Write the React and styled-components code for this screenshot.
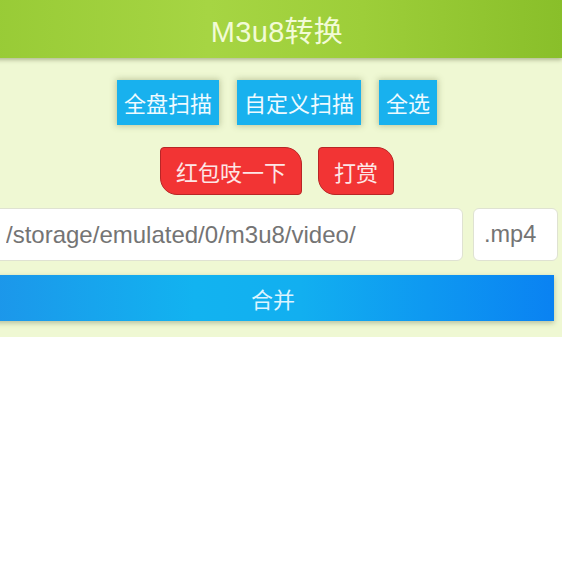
import React from "react";
import styled, { createGlobalStyle } from "styled-components";

const GlobalStyle = createGlobalStyle`
  html, body {
    margin: 0;
    padding: 0;
    background: #ffffff;
    overflow: hidden;
  }
  body {
    font-family: "Liberation Sans", "Noto Sans CJK SC", sans-serif;
  }
`;

const Page = styled.div`
  width: 570px;
  margin-left: -8px;
`;

const Header = styled.header`
  position: relative;
  z-index: 2;
  height: 58px;
  display: flex;
  align-items: center;
  justify-content: center;
  background: linear-gradient(90deg, #98cb36 0%, #a6d543 38%, #9dce39 65%, #89bf2a 100%);
  box-shadow: 0 2px 4px rgba(60, 70, 30, 0.35);
`;

const Title = styled.h1`
  margin: 0;
  font-size: 29px;
  font-weight: 400;
  color: #f2fbd6;
  letter-spacing: 0.3px;
`;

const Panel = styled.section`
  background: #eff8d3;
  padding: 22px 0 16px;
  display: flex;
  flex-direction: column;
  box-shadow: 0 1px 3px rgba(150, 160, 100, 0.35);
`;

const ButtonRow = styled.div`
  display: flex;
  justify-content: center;
  gap: ${(p) => p.$gap}px;
  margin-top: ${(p) => p.$top || 0}px;
`;

const ScanButton = styled.button`
  height: 45px;
  padding: 0 7px;
  border: none;
  border-radius: 0;
  background: #18b1ee;
  color: #eefaff;
  font-family: "Noto Sans CJK SC", sans-serif;
  font-size: 22px;
  line-height: 45px;
  box-shadow: 0 0 6px 1px rgba(130, 140, 90, 0.45);
  cursor: pointer;
`;

const RedButton = styled.button`
  height: 48px;
  padding: 0 15px;
  border: 1px solid #b82626;
  border-radius: 4px 17px 4px 17px;
  background: #f23434;
  color: #fde6e6;
  font-family: "Noto Sans CJK SC", sans-serif;
  font-size: 22px;
  cursor: pointer;
`;

const InputRow = styled.div`
  display: flex;
  gap: 10px;
  margin-top: 13px;
  padding-right: 4px;
`;

const PathInput = styled.input`
  flex: 1;
  min-width: 0;
  height: 53px;
  box-sizing: border-box;
  padding: 0 0 0 13px;
  border: 1px solid #dfe2d2;
  border-radius: 6px;
  background: #ffffff;
  color: #747474;
  font-family: "Liberation Sans", sans-serif;
  font-size: ${(p) => p.$size || 24}px;
  outline: none;
`;

const ExtInput = styled(PathInput)`
  flex: 0 0 85px;
  padding-left: 10px;
`;

const MergeButton = styled.button`
  height: 46px;
  margin: 14px 8px 0 0;
  border: none;
  background: linear-gradient(90deg, #1c96ea 0%, #12b3f0 36%, #12aff0 55%, #0a82f2 100%);
  color: #dcf4ff;
  font-family: "Noto Sans CJK SC", sans-serif;
  font-size: 22px;
  box-shadow: 0 2px 5px rgba(70, 90, 60, 0.35);
  cursor: pointer;
`;

export default function App() {
  return (
    <>
      <GlobalStyle />
      <Page>
        <Header>
          <Title>M3u8转换</Title>
        </Header>
        <Panel>
          <ButtonRow $gap={18}>
            <ScanButton>全盘扫描</ScanButton>
            <ScanButton>自定义扫描</ScanButton>
            <ScanButton>全选</ScanButton>
          </ButtonRow>
          <ButtonRow $gap={16} $top={22}>
            <RedButton>红包吱一下</RedButton>
            <RedButton>打赏</RedButton>
          </ButtonRow>
          <InputRow>
            <PathInput defaultValue="/storage/emulated/0/m3u8/video/" />
            <ExtInput $size={23.5} defaultValue=".mp4" />
          </InputRow>
          <MergeButton>合并</MergeButton>
        </Panel>
      </Page>
    </>
  );
}
